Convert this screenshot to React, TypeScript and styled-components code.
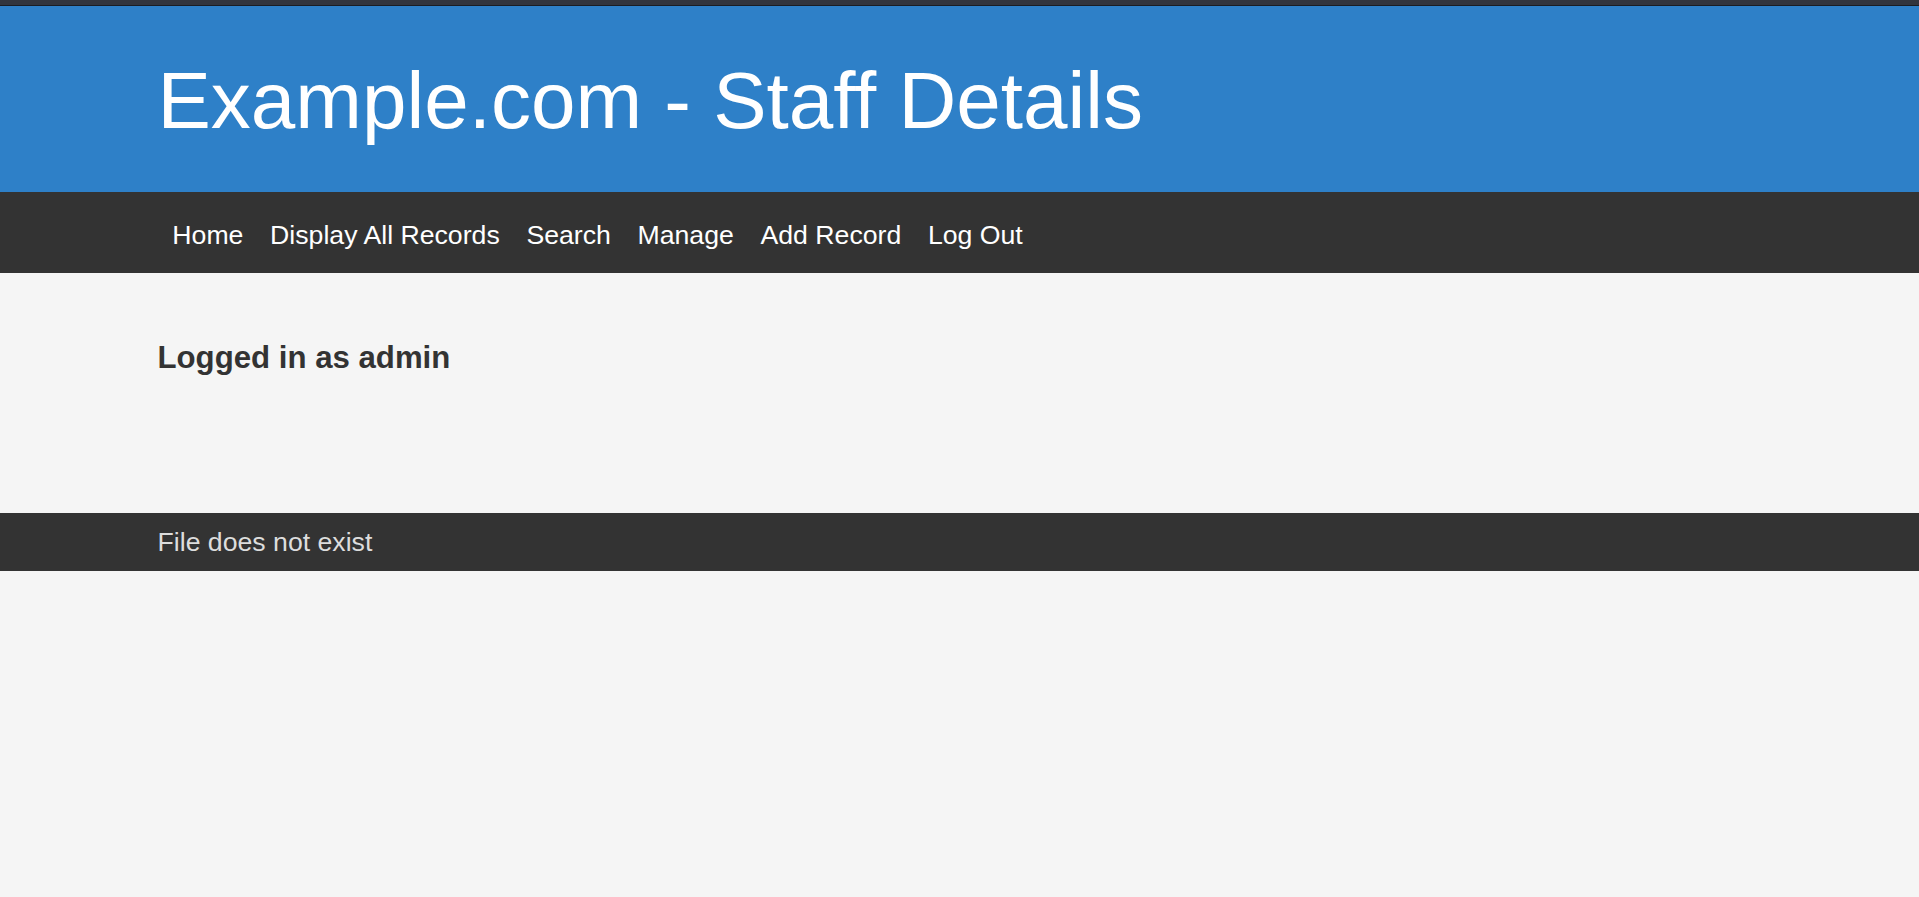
import React from "react";
import styled, { createGlobalStyle } from "styled-components";

const GlobalStyle = createGlobalStyle`
  html, body {
    margin: 0;
    padding: 0;
    background: #f5f5f5;
    font-family: "Liberation Sans", Arial, sans-serif;
  }
  * { box-sizing: border-box; }
`;

const Page = styled.div`
  min-height: 897px;
  background: #f5f5f5;
  display: flex;
  flex-direction: column;
`;

const TopStrip = styled.div`
  height: 6px;
  background: #32353e;
  border-bottom: 1px solid #1b1d23;
`;

const Header = styled.header`
  background: #2e80c8;
  padding: 49px 0 45px 157.5px;
`;

const Title = styled.h1`
  margin: 0;
  font-size: 80px;
  font-weight: 400;
  line-height: 92px;
  color: #ffffff;
`;

const Nav = styled.nav`
  background: #333333;
  height: 81px;
  padding: 28px 0 0 159px;
`;

const NavList = styled.ul`
  list-style: none;
  margin: 0;
  padding: 0;
  display: flex;
`;

const NavItem = styled.li`
  font-size: 26.667px;
  line-height: 30.667px;
  padding: 0 13.333px;
  color: #ffffff;
  white-space: nowrap;
`;

const Main = styled.main`
  height: 240px;
  padding: 67px 0 0 157.5px;
`;

const Status = styled.h2`
  margin: 0;
  font-size: 31.2px;
  font-weight: 700;
  line-height: 36px;
  color: #333333;
`;

const Footer = styled.footer`
  background: #333333;
  height: 58px;
  padding-left: 157.5px;
  display: flex;
  align-items: center;
`;

const FooterText = styled.p`
  margin: 0;
  font-size: 26.667px;
  line-height: 30.667px;
  color: #dddddd;
`;

const links = ["Home", "Display All Records", "Search", "Manage", "Add Record", "Log Out"];

export default function App() {
  return (
    <>
      <GlobalStyle />
      <Page>
        <TopStrip />
        <Header>
          <Title>Example.com - Staff Details</Title>
        </Header>
        <Nav>
          <NavList>
            {links.map((l) => (
              <NavItem key={l}>{l}</NavItem>
            ))}
          </NavList>
        </Nav>
        <Main>
          <Status>Logged in as admin</Status>
        </Main>
        <Footer>
          <FooterText>File does not exist</FooterText>
        </Footer>
      </Page>
    </>
  );
}
